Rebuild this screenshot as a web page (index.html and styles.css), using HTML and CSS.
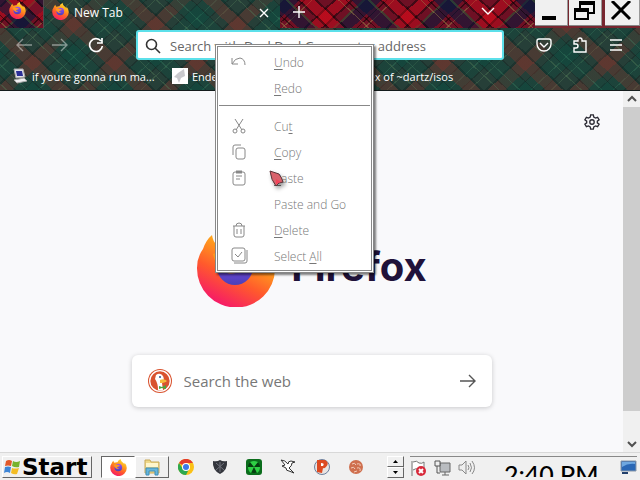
FILE: index.html
```
<!DOCTYPE html>
<html lang="en">
<head>
  <meta charset="UTF-8">
  <title>New Tab</title>
  <link rel="stylesheet" href="styles.css">
</head>
<body>

  <!-- shared icons -->
  <svg class="defs" aria-hidden="true">
    <defs>
      <linearGradient id="flame" x1="0.8" y1="0" x2="0.3" y2="1">
        <stop offset="0" stop-color="#ffe83a"/>
        <stop offset="0.35" stop-color="#ffa21c"/>
        <stop offset="0.65" stop-color="#ff5a2c"/>
        <stop offset="1" stop-color="#f5156c"/>
      </linearGradient>
      <linearGradient id="globe" x1="0" y1="0" x2="0" y2="1">
        <stop offset="0" stop-color="#9a4dfb"/>
        <stop offset="1" stop-color="#4a40b8"/>
      </linearGradient>
      <symbol id="fox" viewBox="0 0 80 80">
        <path fill="url(#flame)" d="M7 22 Q10 13 16 8 Q17 15 21 18 Q27 14 35 15 Q39 5 50 0 Q51 10 60 16 Q65 19 67 25 Q69 21 68 17 Q79 29 79 42 A39 39 0 0 1 1 41 Q1 30 7 22Z"/>
        <circle cx="39" cy="40" r="18" fill="url(#globe)"/>
        <path fill="#ff9a1e" d="M17 27 Q28 21 38 28 Q45 28 47 31 Q45 36 37 37 Q32 39 34 42 Q38 45 44 43 Q40 48 31 46 Q20 42 17 27Z"/>
      </symbol>
      <symbol id="panes" viewBox="0 0 18 18">
        <path fill="#e2592a" d="M3 3 Q6 1 9 3 L8 8 Q5 7 2 8Z"/>
        <path fill="#78b32e" d="M10 3 Q13 5 17 3 L16 9 Q12 10 9 8Z"/>
        <path fill="#3f86d6" d="M2 9 Q5 8 8 9 L7 15 Q4 13 1 15Z"/>
        <path fill="#f3bd25" d="M9 10 Q12 11 16 10 L14 16 Q11 17 8 15Z"/>
      </symbol>
    </defs>
  </svg>

  <header class="browser">
    <div class="tabs">
      <div class="pinned tartan"><svg class="fox-small"><use href="#fox"/></svg></div>
      <div class="tab">
        <svg class="fox-small"><use href="#fox"/></svg>
        <span class="tab-title">New Tab</span>
        <button class="flat" aria-label="Close tab">
          <svg width="10" height="10" viewBox="0 0 10 10"><path d="M1 1L9 9M9 1L1 9"/></svg>
        </button>
      </div>
      <div class="strip tartan">
        <button class="flat" aria-label="New tab">
          <svg width="14" height="14" viewBox="0 0 14 14"><path d="M7 1V13M1 7H13"/></svg>
        </button>
        <button class="flat" aria-label="List all tabs">
          <svg width="14" height="14" viewBox="0 0 14 14"><path d="M1 3L7 9L13 3"/></svg>
        </button>
      </div>
      <div class="controls">
        <button class="control" aria-label="Minimize">
          <svg width="28" height="24" viewBox="0 0 28 24"><path fill="#000" d="M6 15H20V19H6Z"/></svg>
        </button>
        <button class="control" aria-label="Restore">
          <svg width="28" height="24" viewBox="0 0 28 24"><path fill="none" stroke="#000" stroke-width="2" d="M10 7V1H24V12H19M5 8H18V18H5Z"/><path fill="#000" d="M9 0H25V4H9ZM4 7H19V11H4Z"/></svg>
        </button>
        <button class="control close" aria-label="Close">
          <svg width="28" height="24" viewBox="0 0 28 24"><path fill="none" stroke="#000" stroke-width="3" d="M6 0L24 18M24 0L6 18"/></svg>
        </button>
      </div>
    </div>

    <div class="toolbar">
      <div class="nav">
        <button class="flat dim" aria-label="Back">
          <svg width="16" height="14" viewBox="0 0 16 14"><path d="M16 7H1M7 1L1 7L7 13"/></svg>
        </button>
        <button class="flat dim" aria-label="Forward">
          <svg width="16" height="14" viewBox="0 0 16 14"><path d="M0 7H15M9 1L15 7L9 13"/></svg>
        </button>
        <button class="flat reload" aria-label="Reload">
          <svg width="16" height="16" viewBox="0 0 16 16"><path d="M13 4A6.400 6.400 0 1 0 14.400 9M14 1V6H9"/></svg>
        </button>
      </div>
      <form class="urlbar">
        <svg width="16" height="16" viewBox="0 0 16 16"><circle cx="6.500" cy="6.500" r="5"/><path d="M10 10L15 15"/></svg>
        <input type="text" aria-label="Address" placeholder="Search with DuckDuckGo or enter address">
      </form>
      <div class="tools">
        <button class="flat" aria-label="Save to Pocket">
          <svg width="16" height="16" viewBox="0 0 16 16"><path d="M3 2H13Q15 2 15 4V7A7 7 0 0 1 1 7V4Q1 2 3 2ZM4 6L8 10L12 6"/></svg>
        </button>
        <button class="flat" aria-label="Extensions">
          <svg width="16" height="16" viewBox="0 0 16 16"><path d="M2 15V11H4A2 2 0 0 0 4 7H2V4H6V3A2 2 0 0 1 10 3V4H14V15Z"/></svg>
        </button>
        <button class="flat" aria-label="Menu">
          <svg width="16" height="16" viewBox="0 0 16 16"><path d="M2 3H14M2 8H14M2 13H14"/></svg>
        </button>
      </div>
    </div>

    <nav class="bookmarks">
      <a class="bookmark" href="#">
        <svg width="16" height="16" viewBox="0 0 16 16"><path fill="#e4e4ea" stroke="#aaa" d="M2 1L11 1L13 9L4 10Z"/><path fill="#2b2f96" d="M4 3L10 3L11 8L5 8Z"/><path fill="#f0f0f2" stroke="#aaa" d="M2 12L12 10L15 13L5 15Z"/></svg>
        <span>if youre gonna run ma...</span>
      </a>
      <a class="bookmark" href="#">
        <svg width="16" height="16" viewBox="0 0 16 16"><path fill="#fff" d="M0 0H16V16H0Z"/><path fill="#c9c9cd" d="M12 1L13 8L9 10L7 15L5 10L2 9L6 5Z"/></svg>
        <span>Enderman</span>
      </a>
      <a class="bookmark" href="#">
        <svg width="16" height="16" viewBox="0 0 16 16"><circle cx="8" cy="8" r="6" fill="none" stroke="#fff"/></svg>
        <span>Index of ~dartz/isos</span>
      </a>
    </nav>
  </header>

  <main class="page">
    <div class="content">
      <button class="settings" aria-label="Settings">
        <svg width="16" height="16" viewBox="0 0 18 18"><path d="M7.500 1H10.500L11 3.500L13 4.600L15.300 3.700L17 6.500L15 8V10L17 11.500L15.300 14.300L13 13.400L11 14.500L10.500 17H7.500L7 14.500L5 13.400L2.700 14.300L1 11.500L3 10V8L1 6.500L2.700 3.700L5 4.600L7 3.500Z"/><circle cx="9" cy="9" r="2.500"/></svg>
      </button>
      <div class="logo">
        <svg width="80" height="80"><use href="#fox"/></svg>
        <span class="wordmark">Firefox</span>
      </div>
      <form class="search">
        <svg width="24" height="24" viewBox="0 0 24 24">
          <circle cx="12" cy="12" r="12" fill="#d9532f"/>
          <circle cx="12" cy="12" r="10.300" fill="none" stroke="#fff" stroke-width="1.300"/>
          <path fill="#fff" d="M8 6Q12 3 15 7Q17 11 14 14L15 21Q12 22 10 21Q10 14 7 10Z"/>
          <path fill="#f6b93b" d="M12 11Q16 9 19 12Q17 14 12 14Z"/>
          <path fill="#4aa540" d="M11 17L14 18L18 16V20L14 19L11 20Z"/>
          <circle cx="12" cy="8" r="1" fill="#2d4f8e"/>
        </svg>
        <input type="text" aria-label="Search the web" placeholder="Search the web">
        <button class="go" aria-label="Search">
          <svg width="16" height="14" viewBox="0 0 16 14"><path d="M0 7H15M9 1L15 7L9 13"/></svg>
        </button>
      </form>
    </div>
    <div class="scrollbar">
      <svg width="10" height="16" viewBox="0 0 10 16"><path d="M1 10L5 6L9 10"/></svg>
      <div class="thumb"></div>
      <svg width="10" height="16" viewBox="0 0 10 16"><path d="M1 6L5 10L9 6"/></svg>
    </div>
  </main>

  <footer class="taskbar">
    <button class="start"><svg width="18" height="18"><use href="#panes"/></svg><span>Start</span></button>
    <div class="tasks">
      <button class="task active" aria-label="Firefox"><svg width="17" height="17"><use href="#fox"/></svg></button>
      <button class="task raised" aria-label="Explorer">
        <svg width="18" height="18" viewBox="0 0 18 18"><path fill="#efd98a" stroke="#c8a957" d="M2 2H7L8 4H16V15H2Z"/><path fill="#fff6cc" d="M3 5H15V9H3Z"/><path fill="#66b6dc" stroke="#3d8eb8" d="M3 17V10H15V17H12V13H6V17Z"/></svg>
      </button>
      <button class="task" aria-label="Chrome">
        <svg width="16" height="16" viewBox="0 0 16 16"><circle cx="8" cy="8" r="8" fill="#fbc116"/><path fill="#e33b2e" d="M8 8L1 4A8 8 0 0 1 15 4H8Z"/><path fill="#2da94f" d="M1 4A8 8 0 0 0 8 16L11 10L8 8L5 10Z"/><circle cx="8" cy="8" r="4" fill="#fff"/><circle cx="8" cy="8" r="3" fill="#3b78e7"/></svg>
      </button>
      <button class="task" aria-label="Shield">
        <svg width="16" height="16" viewBox="0 0 16 16"><path fill="#34363d" d="M1 2Q5 3 8 1Q11 3 15 2Q16 11 8 15Q0 11 1 2Z"/><path fill="none" stroke="#70737c" d="M4 4L12 11M12 4L4 11M8 3V13"/></svg>
      </button>
      <button class="task" aria-label="Radiation">
        <svg width="16" height="16" viewBox="0 0 16 16"><rect width="16" height="16" rx="3" fill="#0b6d1c"/><circle cx="8" cy="8" r="6" fill="#063d10"/><path fill="#2fd045" d="M8 8L4 3Q8 1 12 3ZM8 8L14 8Q14 12 11 14ZM8 8L2 8Q2 12 5 14Z"/></svg>
      </button>
      <button class="task" aria-label="Bird">
        <svg width="16" height="16" viewBox="0 0 16 16"><path fill="#fff" stroke="#333" d="M1 1Q5 1 8 5Q8 2 11 2L15 3L12 4Q12 7 9 9L14 14L9 12Q6 12 6 9L2 7L5 6Z"/></svg>
      </button>
      <button class="task" aria-label="Player">
        <svg width="16" height="16" viewBox="0 0 16 16"><circle cx="8" cy="8" r="7.500" fill="#e9e4e2" stroke="#6d7f9d"/><path fill="#dd4a22" d="M3 1H11Q16 4 12 8Q10 10 9 9L8 14L3 13Z"/><path fill="#fff" d="M7 4Q11 4 9 7L7 7Z"/></svg>
      </button>
      <button class="task" aria-label="Cookie">
        <svg width="16" height="16" viewBox="0 0 16 16"><circle cx="8" cy="8" r="7" fill="#cf6f4e"/><path fill="none" stroke="#f3cdbb" d="M4 5Q7 3 8 6M9 5Q13 4 12 7M3 9Q6 7 7 10M9 9Q13 8 12 12M6 13L9 12"/></svg>
      </button>
    </div>
    <div class="spinner">
      <button aria-label="Scroll up"><svg width="5" height="3" viewBox="0 0 5 3"><path d="M0 3L2.500 0L5 3Z"/></svg></button>
      <button aria-label="Scroll down"><svg width="5" height="3" viewBox="0 0 5 3"><path d="M0 0L2.500 3L5 0Z"/></svg></button>
    </div>
    <div class="tray">
      <svg width="18" height="18" viewBox="0 0 18 18"><path fill="#fff" stroke="#777" d="M2 16V1M3 2Q7 0 9 3Q12 4 14 2V10Q10 11 8 9Q6 8 3 10"/><circle cx="11" cy="11" r="5" fill="#d8293b"/><path stroke="#fff" stroke-width="2" d="M9 9L13 13M13 9L9 13"/></svg>
      <svg width="18" height="18" viewBox="0 0 18 18"><path fill="#b9bcc0" stroke="#666" d="M6 3H16V12H6ZM8 15H15M11 12V15"/><path fill="#eee" stroke="#555" d="M1 1H6V6H1ZM3 6V13H6"/></svg>
      <svg width="18" height="18" viewBox="0 0 18 18"><path fill="#eee" stroke="#888" d="M1 5H4L8 1V14L4 10H1Z"/><path fill="none" stroke="#888" d="M10 5Q12 8 10 10M12 3Q15 8 12 12M14 1Q19 8 14 14"/></svg>
      <time class="clock">2:40 PM</time>
      <svg class="desktop" width="17" height="14" viewBox="0 0 17 14"><path fill="#2a67b5" stroke="#8a98a8" d="M1 1H16V11H1Z"/><path fill="#6ea7e0" d="M2 7Q8 3 15 4V2H2Z"/><path fill="#223f6c" d="M2 12H8V14H2Z"/></svg>
    </div>
  </footer>

  <div class="menu" role="menu">
    <div class="menu-group">
      <button class="item" role="menuitem" disabled>
        <svg width="18" height="18" viewBox="0 0 18 18"><path d="M2 5V11H8M2 11Q5 5 10 5Q15 6 15 12"/></svg><span><u>U</u>ndo</span>
      </button>
      <button class="item" role="menuitem" disabled><i></i><span><u>R</u>edo</span></button>
    </div>
    <div class="menu-group">
      <button class="item" role="menuitem" disabled>
        <svg width="18" height="18" viewBox="0 0 18 18"><path d="M5 2L12 13M13 2L6 13"/><circle cx="5" cy="14" r="2"/><circle cx="13" cy="14" r="2"/></svg><span>Cu<u>t</u></span>
      </button>
      <button class="item" role="menuitem" disabled>
        <svg width="18" height="18" viewBox="0 0 18 18"><rect x="6" y="5" width="9" height="11" rx="2"/><path d="M3 12V4Q3 2 5 2H11"/></svg><span><u>C</u>opy</span>
      </button>
      <button class="item" role="menuitem" disabled>
        <svg width="18" height="18" viewBox="0 0 18 18"><rect x="3" y="3" width="12" height="13" rx="2"/><path d="M6 7H12M6 10H10"/><path stroke-width="3" d="M6 3H12"/></svg><span><u>P</u>aste</span>
      </button>
      <button class="item" role="menuitem" disabled><i></i><span>Paste and Go</span></button>
      <button class="item" role="menuitem" disabled>
        <svg width="18" height="18" viewBox="0 0 18 18"><path d="M3 5H15M4 5V14Q4 16 6 16H12Q14 16 14 14V5M6 5Q6 2 9 2Q12 2 12 5M7 8V13M11 8V13"/></svg><span><u>D</u>elete</span>
      </button>
      <button class="item" role="menuitem" disabled>
        <svg width="18" height="18" viewBox="0 0 18 18"><rect x="2" y="1" width="13" height="13" rx="2"/><path d="M5 7L8 10L12 5M17 3V14Q17 16 15 16H4"/></svg><span>Select <u>A</u>ll</span>
      </button>
    </div>
  </div>

  <svg class="cursor" width="18" height="20" viewBox="0 0 18 20"><path fill="#d9626c" stroke="#5c3438" d="M1 1L10 4Q13 8 14 12L10 13L7 16Q2 10 1 1Z"/><path fill="#f4435a" d="M7 9L12 12L7 14Z"/></svg>

</body>
</html>
```
FILE: styles.css
```
* {
  box-sizing: border-box;
}

body {
  margin: 0;
  height: 100vh;
  display: flex;
  flex-direction: column;
  overflow: hidden;
  font-family: "Segoe UI", "Open Sans", sans-serif;
  font-size: 12px;
  background: #f9f9fb;
}

svg {
  display: block;
  flex: none;
}

button {
  padding: 0;
  border: none;
  background: none;
  font: inherit;
}

input {
  flex: 1;
  min-width: 0;
  padding: 0;
  border: none;
  outline: none;
  background: none;
  font: inherit;
}

.defs {
  position: absolute;
  width: 0;
  height: 0;
}

/* plaid theme */
.browser {
  height: 91px;
  color: #fff;
  border-bottom: 1px solid #141c1c;
  background:
    repeating-linear-gradient(43deg, transparent 0 4px, rgba(80,120,85,0.4) 4px 5px, transparent 5px 10px, rgba(10,25,25,0.3) 10px 11px, rgba(0,80,66,0.25) 11px 18px, rgba(40,125,95,0.4) 18px 19px, rgba(0,80,66,0.25) 19px 28px, rgba(10,25,25,0.3) 28px 29px, transparent 29px 36px, rgba(135,50,42,0.35) 36px 48px, rgba(10,25,25,0.3) 48px 50px, transparent 50px 56px),
    repeating-linear-gradient(-43deg, transparent 0 4px, rgba(80,120,85,0.4) 4px 5px, transparent 5px 10px, rgba(10,25,25,0.3) 10px 11px, rgba(0,80,66,0.25) 11px 18px, rgba(40,125,95,0.4) 18px 19px, rgba(0,80,66,0.25) 19px 28px, rgba(10,25,25,0.3) 28px 29px, transparent 29px 36px, rgba(135,50,42,0.35) 36px 48px, rgba(10,25,25,0.3) 48px 50px, transparent 50px 56px),
    #263f38;
}

.tartan {
  background:
    repeating-linear-gradient(43deg, transparent 0 4px, rgba(150,125,70,0.5) 4px 5px, transparent 5px 9px, rgba(0,0,0,0.5) 9px 10px, transparent 10px 13px, rgba(0,24,60,0.55) 13px 24px, rgba(40,85,55,0.6) 24px 26px, transparent 26px 32px, rgba(0,0,0,0.4) 32px 34px, rgba(225,10,25,0.4) 34px 44px, rgba(0,0,0,0.4) 44px 46px, transparent 46px 56px),
    repeating-linear-gradient(-43deg, transparent 0 4px, rgba(150,125,70,0.5) 4px 5px, transparent 5px 9px, rgba(0,0,0,0.5) 9px 10px, transparent 10px 13px, rgba(0,24,60,0.55) 13px 24px, rgba(40,85,55,0.6) 24px 26px, transparent 26px 32px, rgba(0,0,0,0.4) 32px 34px, rgba(225,10,25,0.4) 34px 44px, rgba(0,0,0,0.4) 44px 46px, transparent 46px 56px),
    #6e1024;
}

.tabs {
  display: flex;
  height: 28px;
}

.pinned {
  width: 44px;
  padding: 2px 9px;
  border-right: 1px solid #54484c;
}

.fox-small {
  width: 17px;
  height: 17px;
}

.tab {
  display: flex;
  gap: 5px;
  width: 236px;
  padding: 3px 11px 0 8px;
}

.tab-title {
  flex: 1;
  line-height: 20px;
}

.tab .flat {
  height: 19px;
}

.strip {
  flex: 1;
  display: flex;
  justify-content: space-between;
  padding: 2px 40px 6px 12px;
}

.flat {
  display: flex;
  align-items: center;
}

.flat svg,
.urlbar svg,
.settings svg,
.go svg,
.scrollbar svg,
.item svg {
  fill: none;
  stroke: #fff;
}

.flat svg {
  stroke-width: 1.4;
}

.controls {
  display: flex;
  gap: 1px;
  background: #77262f;
}

.control {
  width: 33px;
  height: 26px;
  padding-left: 1px;
  background: #f0f0f0;
  border-right: 1px solid #999;
  border-bottom: 1px solid #888;
}

.control.close {
  width: 35px;
  margin-left: 2px;
}

.toolbar {
  display: flex;
  align-items: center;
  gap: 32px;
  padding: 2px 16px 0;
}

.nav,
.tools {
  display: flex;
  gap: 20px;
}

.dim svg {
  opacity: 0.45;
}

.reload svg {
  stroke-width: 1.7;
}

.urlbar {
  flex: 1;
  display: flex;
  align-items: center;
  gap: 9px;
  height: 30px;
  padding: 2px 7px 0;
  font-size: 13px;
  background: #fff;
  border: 2px solid #5ce0ea;
  border-radius: 3px;
}

.urlbar svg {
  stroke: #333;
  stroke-width: 1.6;
}

.urlbar input::placeholder {
  color: #666;
}

.bookmarks {
  display: flex;
  padding: 6px 12px;
  font-size: 11px;
}

.bookmark {
  display: flex;
  align-items: center;
  gap: 4px;
  width: 160px;
  height: 20px;
  color: #fff;
  text-decoration: none;
  white-space: nowrap;
}

/* new tab page */
.page {
  flex: 1;
  display: flex;
  min-height: 0;
}

.content {
  flex: 1;
  display: flex;
  flex-direction: column;
  align-items: center;
}

.settings {
  align-self: flex-end;
  margin: 23px 23px 0 0;
}

.settings svg {
  stroke: #2b2a33;
  stroke-width: 1.5;
}

.logo {
  display: flex;
  align-items: center;
  gap: 15px;
  margin-top: 97px;
}

.wordmark {
  font-family: Inter, sans-serif;
  font-weight: 700;
  font-size: 40px;
  line-height: 80px;
  color: #20123a;
}

.search {
  display: flex;
  align-items: center;
  gap: 12px;
  width: 360px;
  height: 52px;
  margin-top: 48px;
  padding: 0 16px;
  font-size: 15px;
  background: #fff;
  border-radius: 6px;
  box-shadow: 0 1px 5px rgba(0,0,0,0.2);
}

.search input::placeholder {
  color: #777;
}

.go svg {
  stroke: #555;
  stroke-width: 1.4;
}

.scrollbar {
  display: flex;
  flex-direction: column;
  align-items: center;
  width: 17px;
  background: #f0f0f0;
}

.scrollbar svg {
  stroke: #505050;
  stroke-width: 2;
}

.thumb {
  width: 100%;
  height: 304px;
  margin-bottom: auto;
  background: #cdcdcd;
}

/* taskbar */
.taskbar {
  display: flex;
  height: 28px;
  padding: 3px 3px 0 2px;
  background: #f0f0f0;
  border-top: 1px solid #d8d8d8;
}

.start {
  display: flex;
  align-items: center;
  gap: 1px;
  width: 90px;
  height: 22px;
  border: 1px solid;
  border-color: #fff #666 #666 #fff;
  font-family: "Comic Sans MS", "DejaVu Sans", sans-serif;
  font-weight: 700;
  font-size: 23px;
  line-height: 20px;
}

.tasks {
  display: flex;
  flex: 1;
  margin-left: 9px;
}

.task {
  display: flex;
  align-items: center;
  justify-content: center;
  width: 34px;
  height: 22px;
  border: 1px solid transparent;
}

.task.active {
  background: #fff;
  border-color: #666 #fff #fff #666;
}

.task.raised {
  border-color: #fff #666 #666 #fff;
}

.spinner {
  display: flex;
  flex-direction: column;
  width: 17px;
  margin-right: 6px;
}

.spinner button {
  display: flex;
  align-items: center;
  justify-content: center;
  height: 11px;
  border: 1px solid;
  border-color: #fff #666 #666 #fff;
}

.tray {
  display: flex;
  gap: 6px;
  width: 227px;
  padding-top: 3px;
  border-top: 1px solid #888;
}

/* the clock is taller than the bar, so its foot is hidden */
.clock {
  height: 17px;
  margin-left: 22px;
  font-family: "Comic Sans MS", Lato, sans-serif;
  font-weight: 500;
  font-size: 25px;
  line-height: 28px;
  overflow: hidden;
}

.desktop {
  margin-left: auto;
}

/* context menu */
.menu {
  position: absolute;
  left: 215px;
  top: 44px;
  width: 159px;
  padding: 2px 1px 1px;
  font-weight: 300;
  background: #fff;
  border: 3px double #888;
  box-shadow: 2px 2px 2px rgba(0,0,0,0.5);
}

.menu-group + .menu-group {
  margin-top: 4px;
  padding-top: 7px;
  border-top: 1px solid #888;
}

.item {
  display: flex;
  align-items: center;
  gap: 26px;
  width: 100%;
  height: 26px;
  padding-left: 11px;
  color: #777;
}

.item i {
  width: 18px;
}

.item svg {
  stroke: #888;
}

.item u {
  text-underline-offset: 2px;
}

.cursor {
  position: absolute;
  left: 269px;
  top: 170px;
  filter: drop-shadow(2px 3px 2px rgba(0,0,0,0.4));
}
```
